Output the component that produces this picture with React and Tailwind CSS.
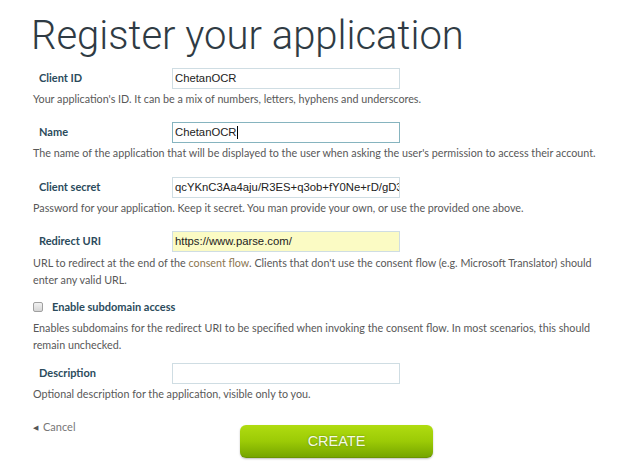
import React from "react";

const sans = { fontFamily: "Lato, 'Open Sans', sans-serif" };

function Field({ label, value, variant = "", children }) {
  const bg = variant === "yellow" ? "bg-[#fbfbc4]" : "bg-white";
  const border = variant === "focus" ? "border-[#86b4bf]" : "border-[#cfdde3]";
  return (
    <div className="flex items-center h-[21px]">
      <div className="w-[139px] pl-[6px] text-[11px] font-bold text-[#2b4b5c]">{label}</div>
      <div
        className={
          "w-[228px] h-[21px] border flex items-center pl-[2px] overflow-hidden whitespace-nowrap text-[11.3px] text-[#222] " +
          bg +
          " " +
          border
        }
        style={{ fontFamily: "'Liberation Sans', Arial, sans-serif" }}
      >
        {value}
        {children}
      </div>
    </div>
  );
}

function Desc({ children, className = "" }) {
  return (
    <div className={"text-[10.75px] leading-[17px] text-[#585858] whitespace-nowrap " + className}>{children}</div>
  );
}

export default function App() {
  return (
    <div className="w-[635px] h-[466px] bg-white overflow-hidden pl-[33px]" style={sans}>
      <h1
        className="text-[40px] font-light leading-[48px] text-[#2f3b44] pt-[12px] -ml-[2px]"
        style={{ fontFamily: "Roboto, 'Open Sans', sans-serif" }}
      >
        Register your application
      </h1>

      <div className="mt-[8px]">
        <Field label="Client ID" value="ChetanOCR" />
        <Desc className="mt-[1px]">
          Your application's ID. It can be a mix of numbers, letters, hyphens and underscores.
        </Desc>
      </div>

      <div className="mt-[15px]">
        <Field label="Name" value="ChetanOCR" variant="focus">
          <span className="inline-block w-px h-[13px] bg-black" />
        </Field>
        <Desc className="mt-[1px]">
          The name of the application that will be displayed to the user when asking the user's permission to access their account.
        </Desc>
      </div>

      <div className="mt-[16px]">
        <Field label="Client secret" value="qcYKnC3Aa4aju/R3ES+q3ob+fY0Ne+rD/gD3" />
        <Desc className="mt-[1px]">
          Password for your application. Keep it secret. You man provide your own, or use the provided one above.
        </Desc>
      </div>

      <div className="mt-[15px]">
        <Field label="Redirect URI" value="https://www.parse.com/" variant="yellow" />
        <Desc className="mt-[2px]">
          URL to redirect at the end of the <span className="text-[#8c7650]">consent flow</span>. Clients that don't use the consent flow (e.g. Microsoft Translator) should
          <br />
          enter any valid URL.
        </Desc>
      </div>

      <div className="mt-[9px] flex items-center h-[20px]">
        <span className="w-[10px] h-[10px] rounded-[2px] border border-[#a0a0a0] bg-gradient-to-b from-[#f2f2f2] to-[#d6d6d6]" />
        <span className="ml-[9px] text-[11px] font-bold text-[#2b4b5c]">Enable subdomain access</span>
      </div>
      <Desc className="mt-[2px]">
        Enables subdomains for the redirect URI to be specified when invoking the consent flow. In most scenarios, this should
        <br />
        remain unchecked.
      </Desc>

      <div className="mt-[10px]">
        <Field label="Description" value="" />
        <Desc className="mt-[1px]">Optional description for the application, visible only to you.</Desc>
      </div>

      <div className="flex items-start mt-[17px]">
        <div className="flex items-center w-[207px] text-[11px] text-[#777]">
          <span className="text-[7px] text-[#555] mr-[5px]">◀</span>
          Cancel
        </div>
        <button
          className="mt-[6px] w-[193px] h-[33px] rounded-[6px] bg-gradient-to-b from-[#b0dc10] via-[#9ccb06] to-[#76a600] border-b border-[#6a9400] shadow-[0_1px_2px_rgba(0,0,0,0.25)] text-[14.5px] pt-[2px] text-[#f4fae6] [text-shadow:0_0_2px_rgba(60,90,0,0.6)]"
          style={{ fontFamily: "'Liberation Sans', Arial, sans-serif" }}
        >
          CREATE
        </button>
      </div>
    </div>
  );
}
